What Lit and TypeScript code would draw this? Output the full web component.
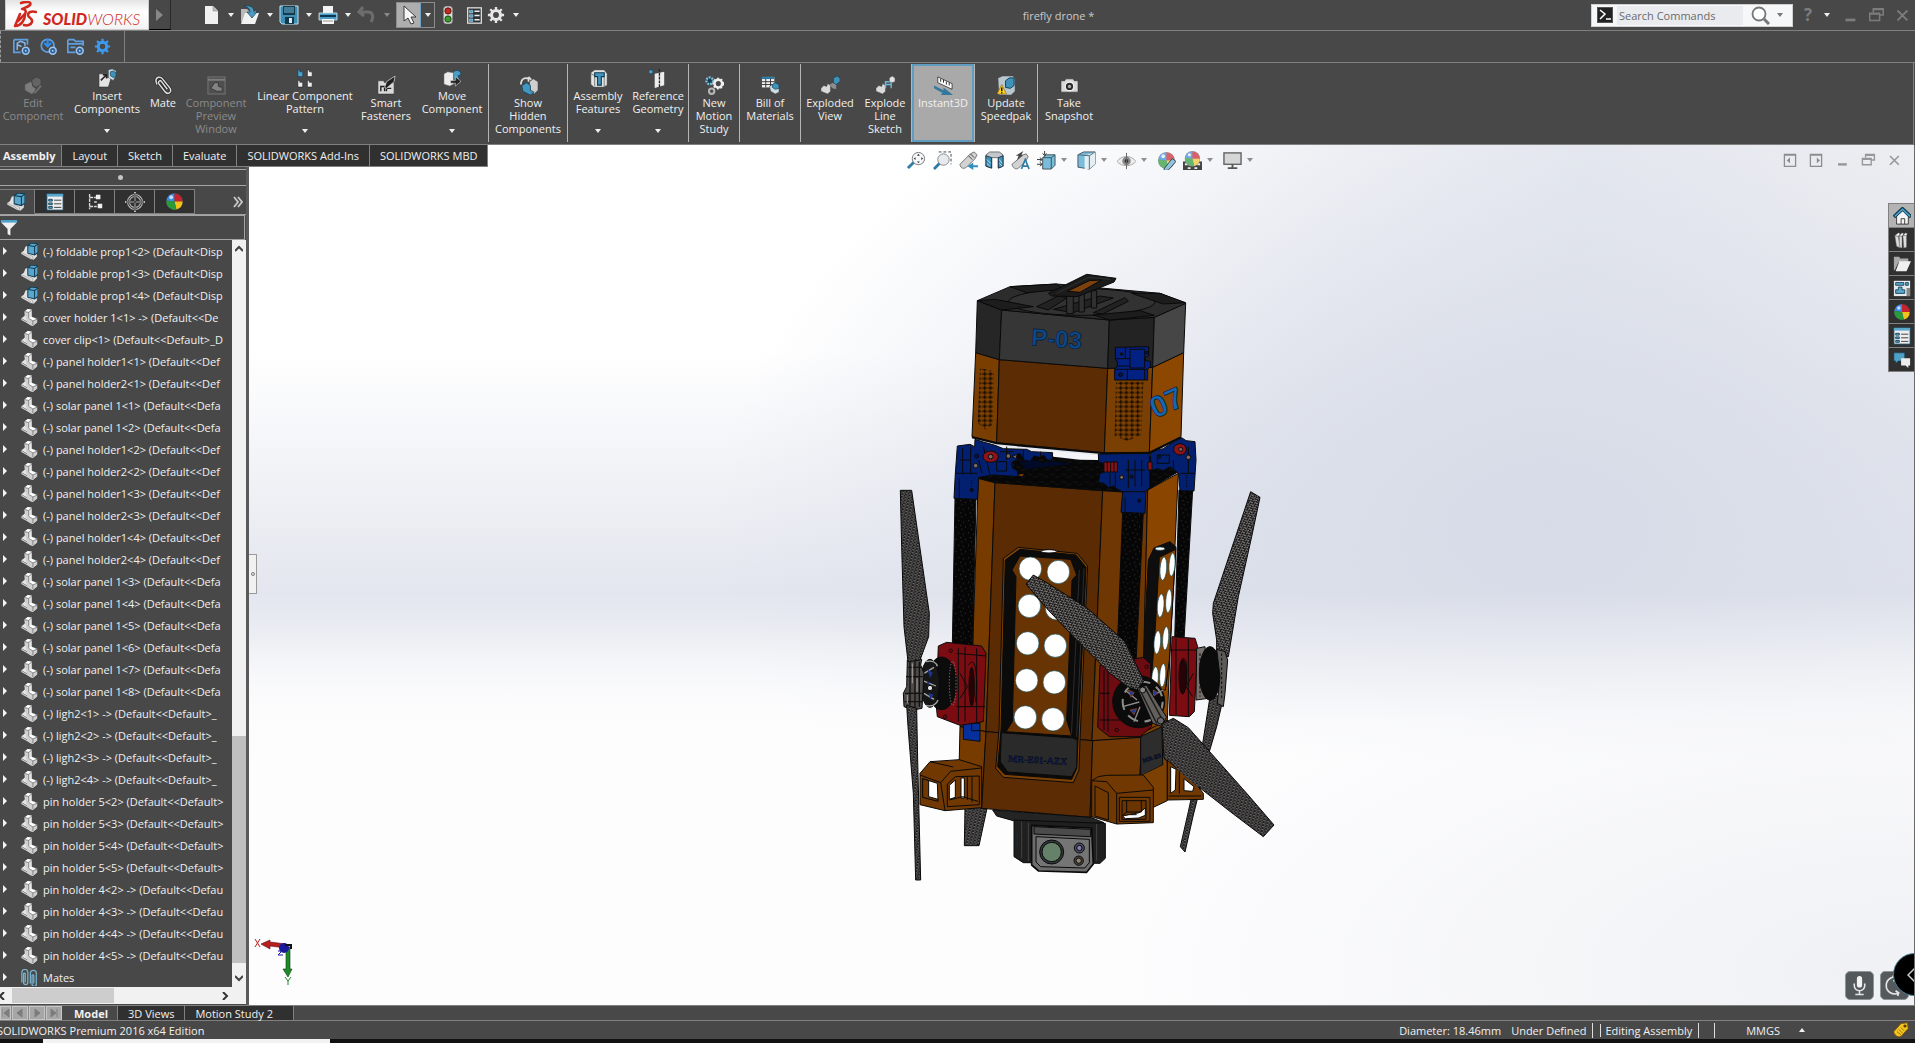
import { LitElement, html, svg, css, nothing } from "lit";
import { customElement, state } from "lit/decorators.js";
import { classMap } from "lit/directives/class-map.js";

const icon = (size: number, content: unknown, vb = "0 0 20 20") =>
  html`<svg width=${size} height=${size} viewBox=${vb} aria-hidden="true">${content}</svg>`;

const caret = html`<svg class="caret" width="6" height="4" viewBox="0 0 6 4" aria-hidden="true"><path d="M0 0h6L3 4z" fill="currentColor"/></svg>`;

/* ---------- glyph library ---------- */

const cube = svg`<path d="M1 9l6-3 2 1v4l3 2v4l-4 2-7-4z" fill="#dcdcdc" stroke="#777" stroke-width=".6"/>`;

const assemblyGlyph = svg`
  <path d="M0 11l3-2 2-5 5-2 2 9 7 1v4l-4 4-4-1-11-6z" fill="#e2e2e2" stroke="#2b2b2b" stroke-width=".5"/>
  <path d="M8 13l6 3v3M0 11l8 4 4 3" fill="none" stroke="#9a9a9a" stroke-width=".8"/>
  <path d="M8 3l4-3 8 1v10l-4 3-8-2z" fill="#5ba7cc" stroke="#0f3c55" stroke-width="1.200"/>
  <path d="M8 3l8 1 4-3M16 4v10" fill="none" stroke="#0f3c55" stroke-width="1.200"/>`;

const partGlyph = svg`
  <path d="M0 11l4-3V3l4-3 5 1v8l3 1 3 2v4l-5 4-3-1-11-6z" fill="#e6e6e6" stroke="#383838" stroke-width=".5"/>
  <path d="M4 3l4 1v7l6 3 5-3v5l-5 4-3-1-4-3z" fill="#cfcfcf"/>
  <path d="M4 3l4-3 5 1-4 3zM8 11l4-2 6 3-4 2z" fill="#fff"/>
  <path d="M4 3l5 1 4-3M9 4v7M9 11l5 3 5-2M14 14v5M0 11l7 4" fill="none" stroke="#6c6c6c" stroke-width=".9"/>`;

const matesGlyph = svg`
  <path d="M1 16V4a3 3 0 0 1 7 0v12a2 2 0 0 1-5 0V6a1 1 0 0 1 2 0v10M11 17V5a3 3 0 0 1 7 0v13a2 2 0 0 1-5 0V8a1 1 0 0 1 2 0v9" fill="none" stroke="#78b2cd" stroke-width="1.500"/>`;

const gear = (c: string) => svg`
  <circle cx="10" cy="10" r="5" fill="none" stroke=${c} stroke-width="3.500"/>
  <path d="M10 1v4M10 15v4M1 10h4M15 10h4M3.600 3.600l3 3M13.400 13.400l3 3M16.400 3.600l-3 3M6.600 13.400l-3 3" stroke=${c} stroke-width="2.600"/>`;

const ball = svg`
  <circle cx="10" cy="10" r="9" fill="#444"/>
  <path d="M10 10V1.500A8.500 8.500 0 0 0 1.500 9z" fill="#3a8be8"/><path d="M10 10V1.500A8.500 8.500 0 0 1 18.500 10z" fill="#c8232c"/>
  <path d="M10 10h8.500A8.500 8.500 0 0 1 12 18.300z" fill="#f1c21b"/><path d="M10 10l2 8.300A8.500 8.500 0 0 1 1.500 9z" fill="#2b9a3c"/>
  <circle cx="6.500" cy="5.500" r="2" fill="#fff" opacity=".7"/>`;

const paleBall = svg`
  <circle cx="10" cy="10" r="9" fill="#9a9a9a"/>
  <path d="M10 10V1.500A8.500 8.500 0 0 0 1.500 9z" fill="#6aa9ea"/><path d="M10 10V1.500A8.500 8.500 0 0 1 18.500 10z" fill="#d8616a"/>
  <path d="M10 10h8.500A8.500 8.500 0 0 1 12 18.300z" fill="#f3d469"/><path d="M10 10l2 8.300A8.500 8.500 0 0 1 1.500 9z" fill="#63b56f"/>
  <circle cx="6.500" cy="5.500" r="2" fill="#fff" opacity=".8"/>`;

const listGlyph = svg`
  <rect x="1" y="1" width="18" height="18" fill="#eee" stroke="#13455e"/><rect x="1" y="1" width="18" height="3" fill="#5ba7cc"/>
  <path d="M3 7h4v2H3zM3 11h4v2H3zM3 15h4v2H3z" fill="#5ba7cc" stroke="#13455e"/><path d="M9 8h8M9 12h8M9 16h8" stroke="#333"/>`;

const G: Record<string, unknown> = {
  newdoc: svg`<path d="M4 1h8l5 5v13H4z" fill="#f1f1f1"/><path d="M12 1v5h5" fill="#bbb" stroke="#8a8a8a" stroke-width=".6"/>`,
  open: svg`<path d="M1 4h6l2 2h7v3H6L1 18z" fill="#b9b9b9"/><path d="M1 19L5 8h14l-4 11z" fill="#f2f2f2"/><path d="M4 1c6-1 10 1 10 6h3l-5 6-5-6h3c0-3-2-5-6-6z" fill="#4b9cc4" stroke="#123d55" stroke-width=".7"/>`,
  save: svg`<path d="M1 1h18v18H3l-2-2z" fill="#3f8db3" stroke="#bfe2f2"/><rect x="4" y="1" width="12" height="9" fill="#16394c"/><path d="M5 3h10M5 5h10M5 7h10" stroke="#6fc0e2"/><rect x="6" y="12" width="9" height="7" fill="#12384c"/><rect x="10" y="13" width="3" height="5" fill="#dfe9ee"/>`,
  print: svg`<path d="M5 1h10v7H5z" fill="#f3f3f3"/><path d="M1 8h18v7H1z" fill="#4a9cc4" stroke="#cfe8f4" stroke-width=".8"/><path d="M2 11h16" stroke="#0f3850" stroke-width="2"/><path d="M4 14h12v5H4z" fill="#f6f6f6"/><path d="M5 16h10" stroke="#999"/>`,
  undo: svg`<path d="M6 2L2 7l5 4M3 7h8c5 0 6 5 3 10" fill="none" stroke="#6d6d6d" stroke-width="3"/>`,
  pointer: svg`<path d="M5 1v15l4-3 3 6 3-1-3-6h5z" fill="#f7f7f7" stroke="#3a3a3a"/>`,
  traffic: svg`<rect x="5" y="0" width="10" height="20" rx="4" fill="#d9d9d9" stroke="#8a8a8a"/><circle cx="10" cy="5.500" r="3.500" fill="#c22a1e" stroke="#5b120c"/><circle cx="10" cy="14.500" r="3.500" fill="#3d9a2d" stroke="#153f0e"/>`,
  options: svg`<rect x="2" y="1" width="16" height="18" fill="#2d3438" stroke="#e4e4e4" stroke-width="1.500"/><path d="M4 4h4v3H4zM4 9h4v3H4zM4 14h4v3H4z" fill="#4a9cc4" stroke="#d7edf7" stroke-width=".6"/><path d="M10 5h6M10 10h6M10 15h6" stroke="#eee" stroke-width="1.500"/>`,
  gearWhite: svg`${gear("#e6e6e6")}`,
  gearBlue: svg`${gear("#3d9bf0")}`,
  q1: svg`<path d="M1 2h16v6M1 2v15h8" fill="none" stroke="#5f9fe0" stroke-width="2"/><path d="M5 14V6l4-2 5 2v3M5 8l5 2" fill="none" stroke="#86b9ee" stroke-width="1.800"/><circle cx="15" cy="15" r="4" fill="#33639b" stroke="#9cc6f2" stroke-width="1.800"/><circle cx="15" cy="15" r="1" fill="#cfe4fa"/>`,
  q2: svg`<circle cx="9" cy="9" r="7.500" fill="none" stroke="#5f9fe0" stroke-width="2"/><path d="M9 1v8M5 6l4 4 4-4" stroke="#2f8df2" stroke-width="2.500" fill="none"/><circle cx="15" cy="15" r="4" fill="#33639b" stroke="#9cc6f2" stroke-width="1.800"/><circle cx="15" cy="15" r="1" fill="#cfe4fa"/>`,
  q3: svg`<path d="M1 2h7l2 2h9v5M1 2v15h9M1 7h18M4 11h6" fill="none" stroke="#5f9fe0" stroke-width="2"/><circle cx="15" cy="15" r="4" fill="#33639b" stroke="#9cc6f2" stroke-width="1.800"/><circle cx="15" cy="15" r="1" fill="#cfe4fa"/>`,
  edit: svg`<g opacity=".35">${cube}<path d="M8 4l5-3 5 2v6l-5 3-4-2z" fill="#999" stroke="#333"/><path d="M10 18l7-9 2 2-7 8z" fill="#bbb" stroke="#333" stroke-width=".6"/></g>`,
  insert: svg`<path d="M1 5h9v4h4l-3 10H1z" fill="#e4e4e4" stroke="#333" stroke-width=".7"/><path d="M3 12l6-6M5 6h4v4" stroke="#222" stroke-width="1.600" fill="none"/><path d="M11 1l4-1 4 2v5l-3 5-5-3z" fill="#cfe0ea" stroke="#555" stroke-width=".5"/><path d="M13 3l3-1 3 2v4l-3 1-3-2z" fill="#3f93bb" stroke="#0f3c55" stroke-width=".7"/>`,
  mate: svg`<path d="M3 9L2 5c0-4 5-5 7-2l8 10c2 4-2 7-5 4L5 8c-1-3 2-4 3-2l6 8" fill="none" stroke="#222" stroke-width="3"/><path d="M3 9L2 5c0-4 5-5 7-2l8 10c2 4-2 7-5 4L5 8c-1-3 2-4 3-2l6 8" fill="none" stroke="#dcdcdc" stroke-width="1.600"/>`,
  preview: svg`<g opacity=".4"><rect x="1" y="1" width="18" height="18" fill="#5b5b5b" stroke="#bbb"/><path d="M1 4h18" stroke="#ccc" stroke-width="2"/><path d="M4 13l4-6h4v4l4 1v4h-6z" fill="#ddd" stroke="#222"/></g>`,
  linear: svg`<path d="M2 1h2v2h3v5H2z" fill="#4fa3cb" stroke="#123d55" stroke-width=".6"/><path d="M12 1h2v2h3v5h-5zM2 12h2v2h3v5H2zM12 12h2v2h3v5h-5z" fill="#efefef" stroke="#222" stroke-width=".6"/>`,
  smart: svg`<path d="M1 5h6l1 2h10v12H1z" fill="#d9d9d9" stroke="#333" stroke-width=".6"/><path d="M4 16v-5h4v5M10 16v-3h5" fill="none" stroke="#222" stroke-width="1.500"/><path d="M19 0l-9 6-2 6 2 1 8-7z" fill="#222" stroke="#eee" stroke-width=".7"/>`,
  move: svg`<path d="M1 5l4-2 6 1v12l-4 2-6-2z" fill="#ececec" stroke="#555" stroke-width=".5"/><path d="M11 3c4-3 8-1 8 3l-3 1 2 6-5 4" fill="#4b9cc4" stroke="#123d55" stroke-width=".7"/><path d="M8 12h5V8l6 5-6 5v-3H8z" fill="#262626" stroke="#ddd" stroke-width=".6"/>`,
  showhidden: svg`<path d="M2 9c0-6 4-8 8-6M10 1v5M10 1l3 3" stroke="#ddd" stroke-width="1.800" fill="none"/><path d="M11 6l4-3 5 3v9l-4 4-4-4z" fill="#cfcfcf" stroke="#444" stroke-width=".6"/><path d="M3 10l5-3 4 3v5l4 2-4 3-8-4z" fill="#4496be" stroke="#0f3c55" stroke-width=".7"/>`,
  features: svg`<path d="M2 4l4-3h10l3 4v12l-4 2H5l-3-3z" fill="#e2e2e2" stroke="#555" stroke-width=".5"/><path d="M2 5l4 2v11M16 8v10" stroke="#777" fill="none"/><path d="M6 4h10v4h-3v9H9V8H6z" fill="#4496be" stroke="#123d55" stroke-width="1.200"/>`,
  refgeo: svg`<rect x="0" y="1" width="4" height="4" fill="#4fa3cb" stroke="#123d55" stroke-width=".6"/><path d="M6 5l10-2v14l-10 3z" fill="#ededed"/><path d="M11 0v20" stroke="#222" stroke-width="1.400" stroke-dasharray="3 1"/>`,
  motion: svg`<circle cx="5" cy="5" r="3.500" fill="#173c50" stroke="#7fc0dd" stroke-width="2.400" stroke-dasharray="2 1"/><circle cx="14" cy="8" r="4" fill="none" stroke="#efefef" stroke-width="2.600"/><circle cx="14" cy="8" r="5.500" fill="none" stroke="#efefef" stroke-width="1.500" stroke-dasharray="2 2"/><circle cx="7" cy="16" r="2.800" fill="none" stroke="#b5b5b5" stroke-width="2.200"/>`,
  bom: svg`<path d="M1 1h13v11H1z" fill="#f2f2f2"/><path d="M1 2h13" stroke="#2f7da6" stroke-width="2.500"/><path d="M1 6h13M1 9h13M5 3v9M10 3v9" stroke="#333"/><path d="M9 11l3-2 2-1 5 2v7l-4 2-5-3z" fill="#cfdbe2" stroke="#333" stroke-width=".5"/><path d="M12 9l3-2 4 2v4l-4 1-3-2z" fill="#3f93bb" stroke="#0f3c55" stroke-width=".7"/>`,
  exploded: svg`<path d="M0 13l3-3 3 1 1-3 3 2v6l-3 3-7-3z" fill="#dadada" stroke="#444" stroke-width=".5"/><path d="M9 9l4-2 3 2v5l-4-1z" fill="#8d8d8d"/><path d="M13 2l4-2 3 2v4l-4 3-3-2z" fill="#3f93bb" stroke="#0f3c55" stroke-width=".7"/>`,
  explodeline: svg`<path d="M0 13l3-3 3 1 1-3 3 2v6l-3 3-7-3z" fill="#dadada" stroke="#444" stroke-width=".5"/><path d="M10 13V6h6v7M10 9h6" stroke="#6fb5d6" stroke-width="1.500" fill="none"/><path d="M14 2l3-2 3 2v4l-3 1-3-1z" fill="#e2e2e2" stroke="#444" stroke-width=".5"/>`,
  instant: svg`<path d="M4 1l15 7v6L4 7z" fill="#fff" stroke="#222" stroke-width=".8"/><path d="M7 3v3M10 4v3M13 6v3M16 7v3" stroke="#222"/><path d="M0 10l10 5v-3l10 8-13 0 2-2-9-5z" fill="#35789f"/>`,
  speedpak: svg`<path d="M1 2l5-2h11l2 3v13l-4 4H2z" fill="#b9c7cf" stroke="#444" stroke-width=".5"/><path d="M9 5l4-3h5v8l-4 3-5-1z" fill="#3f93bb" stroke="#0f3c55"/><path d="M5 9l5 10H0z" fill="#ffd21f" stroke="#7c5a00" stroke-width=".6"/><path d="M5 12v4M5 17v1.500" stroke="#111" stroke-width="1.500"/>`,
  snapshot: svg`<path d="M1 5h4l1-2h8l1 2h4v12H1z" fill="#d9d9d9" stroke="#222" stroke-width=".6"/><circle cx="10" cy="11" r="4.500" fill="#2a2a2a" stroke="#f2f2f2" stroke-width="1.300"/><circle cx="10" cy="11" r="1.800" fill="#aaa"/>`,
  zoomfit: svg`<path d="M1 18l7-7" stroke="#2f7da6" stroke-width="3"/><circle cx="12" cy="8" r="6.500" fill="#f6f8fa" stroke="#777"/><path d="M12 3l1.500 2h-3zM12 13l1.500-2h-3zM7 8l2-1.500v3zM17 8l-2-1.500v3z" fill="#333"/>`,
  zoomarea: svg`<path d="M6 1h13v13" fill="none" stroke="#444" stroke-dasharray="3 2"/><path d="M1 19l6-6" stroke="#2f7da6" stroke-width="3"/><circle cx="11" cy="9" r="6" fill="#e6eaee" stroke="#888"/>`,
  prev: svg`<path d="M1 14L12 3l4-2 3 3-2 4-9 9c-3 2-6 2-7-3z" fill="#d2d2d2" stroke="#555" stroke-width=".8"/><path d="M12 3l4 4M10 5l4 4" stroke="#444"/><path d="M20 15h-5v-3l-6 4 6 4v-3h5z" fill="#2f8fc0"/>`,
  section: svg`<path d="M1 4l4-3h10l4 3v12l-5 2V7H7v11l-6-2z" fill="#c2c7cb" stroke="#555" stroke-width=".8"/><path d="M1 5l6 2v11l-6-2zM14 7l5-2v11l-5 2z" fill="#3f93bb" stroke="#234"/><path d="M2 9l4 4M2 13l3 3M15 9l3 4M15 13l3 3" stroke="#bfe2f2"/>`,
  dynamic: svg`<path d="M5 5l8-5-2 4h4l-9 6 2-5z" fill="#444"/><path d="M1 14L13 4l3-1 2 3-2 4-8 8c-3 2-6 0-7-4z" fill="#d2d2d2" stroke="#555" stroke-width=".8"/><path d="M11 19l4-10 4 10M12.500 16h5" stroke="#2f7da6" stroke-width="1.800" fill="none"/>`,
  orient: svg`<path d="M6 7l4-3h9v11l-4 4H6z" fill="#79bddb" stroke="#455"/><path d="M6 7h9v12M15 7l4-3" fill="none" stroke="#356"/><path d="M8 0v4M6 2.500L8 5l2-2.500M0 9h5M3 7l2.500 2L3 11M0 14h5M3 12l2.500 2L3 16" stroke="#333" fill="none"/>`,
  display: svg`<path d="M1 4l6-3h12v13l-6 5-12-2z" fill="#7bbcd9" stroke="#456"/><path d="M8 5l11-4v13l-6 5H8z" fill="#e4eff5"/><path d="M1 4l12 1 6-4M13 5v14" fill="none" stroke="#567"/>`,
  eye: svg`<path d="M0 11C5 4 15 4 20 11 15 17 5 17 0 11z" fill="#ededed" stroke="#aaa"/><circle cx="10" cy="10.500" r="4.500" fill="#888"/><circle cx="10" cy="10.500" r="2" fill="#333"/><path d="M10 2v17" stroke="#666"/>`,
  appearance: svg`${paleBall}<path d="M8 18l8-10 4 3-8 9-5 1z" fill="#8fc6df" stroke="#223" stroke-width=".8"/>`,
  scene: svg`<path d="M0 11h20v9H0z" fill="#444"/><path d="M2 13h3v2H2zM15 13h3v2h-3zM5 17h3v2H5zM12 17h3v2h-3z" fill="#eee"/><g transform="scale(.9) translate(1 -1)">${paleBall}</g>`,
  monitor: svg`<rect x="1" y="2" width="18" height="12" fill="#d6d6d6" stroke="#666" stroke-width="1.500"/><path d="M10 14v4M5 18h10" stroke="#555" stroke-width="2"/>`,
  collapseL: svg`<path d="M3 3h14v15H3zM3 4h14" fill="none" stroke="#8c8c90" stroke-width="1.600"/><path d="M10 7v7l-4-3.500z" fill="#8c8c90"/>`,
  collapseR: svg`<path d="M3 3h14v15H3zM3 4h14" fill="none" stroke="#8c8c90" stroke-width="1.600"/><path d="M11 7v7l4-3.500z" fill="#8c8c90"/>`,
  min: svg`<path d="M5 14h11v3H5z" fill="currentColor"/>`,
  restore: svg`<path d="M7 7V3h11v7h-4M3 8h11v8H3zM3 9h11M7 4h11" fill="none" stroke="currentColor" stroke-width="1.700"/>`,
  close: svg`<path d="M5 5l11 11M16 5L5 16" stroke="currentColor" stroke-width="2"/>`,
  home: svg`<path d="M4 10v9h13v-9l-6-6z" fill="#f4f4f4" stroke="#333"/><path d="M1 11L10.500 2 20 11" fill="none" stroke="#123d55" stroke-width="4"/><path d="M2 10.500L10.500 2.500 19 10.500" fill="none" stroke="#4fa3cb" stroke-width="1.800"/><path d="M9 19v-6h4v6" fill="none" stroke="#333"/>`,
  library: svg`<path d="M2 5l4 1 2 13-4-2zM7 5l3 1v13l-3-1zM11 5l4-1v14l-3 1z" fill="#dcdcdc" stroke="#666" stroke-width=".5"/><path d="M2 5l4-3 2 1-2 3zM7 5l3-3 2 1-2 3zM11 5l3-3 2 1-1 2z" fill="#f5f5f5" stroke="#444" stroke-width=".5"/>`,
  folder: svg`<path d="M1 2h6l1 2h9v4H6L2 17H1z" fill="#a9a9a9"/><path d="M3 18L7 7h13l-5 11z" fill="#efefef"/>`,
  palette: svg`<rect x="1" y="2" width="18" height="17" fill="#e9e9e9"/><path d="M3 4h9v3H3zM14 4h3v3h-3zM6 9h4v3h3v4H3v-4h3z" fill="#5ba7cc" stroke="#13455e"/><path d="M15 10h4v9h-4z" fill="#888"/>`,
  ball, list: listGlyph,
  chat: svg`<path d="M1 2h12v9H6l-3 3v-3H1z" fill="#4f9fc6" stroke="#123d55" stroke-width=".6"/><path d="M9 8h10v8h-2v3l-3-3H9z" fill="#ececec"/>`,
  tree: svg`<path d="M4 1v17M4 5h7M4 15h8M9 10h3" stroke="#d8d8d8" stroke-width="1.500" fill="none" stroke-dasharray="4 1"/><path d="M11 2h5v5h-5zM13 12h5v5h-5z" fill="#f2f2f2"/>`,
  target: svg`<circle cx="10" cy="10" r="6.500" fill="none" stroke="#b8b8b8" stroke-width="3"/><circle cx="10" cy="10" r="6.500" fill="none" stroke="#222"/><path d="M10 0v20M0 10h20" stroke="#b8b8b8" stroke-width="2"/><path d="M10 1v18M1 10h18" stroke="#222"/>`,
  assembly: assemblyGlyph,
  funnel: svg`<path d="M1 1h18v3l-7 7v8l-4-2v-6L1 4z" fill="#f0f0f0" stroke="#2b2b2b" stroke-width=".6"/><path d="M1 1h18v3H1z" fill="#4fa3cb"/>`,
  tag: svg`<path d="M1 12L10 2l8-1 1 7-9 10c-4 2-9-2-9-6z" fill="#f3c522" stroke="#7b5200"/><circle cx="15" cy="5" r="2" fill="#5a3c00"/><path d="M5 12l5 4M7 9l5 5M10 7l4 4" stroke="#8a6200"/>`,
  mic: svg`<rect x="7.500" y="1" width="5" height="11" rx="2.500" fill="#f4f4f4"/><path d="M5 8v2a5 5 0 0 0 10 0V8M10 15v3M6 18.500h8" fill="none" stroke="#e4e4e4" stroke-width="1.500"/>`,
};

interface Tool { label: string[]; glyph: string; width: number; menu?: boolean; off?: boolean; on?: boolean; }

const RIBBON: Tool[][] = [
  [
    { label: ["Edit", "Component"], glyph: "edit", width: 66, off: true },
    { label: ["Insert", "Components"], glyph: "insert", width: 82, menu: true },
    { label: ["Mate"], glyph: "mate", width: 30 },
    { label: ["Component", "Preview", "Window"], glyph: "preview", width: 76, off: true },
    { label: ["Linear Component", "Pattern"], glyph: "linear", width: 102, menu: true },
    { label: ["Smart", "Fasteners"], glyph: "smart", width: 60 },
    { label: ["Move", "Component"], glyph: "move", width: 72, menu: true },
  ],
  [{ label: ["Show", "Hidden", "Components"], glyph: "showhidden", width: 78 }],
  [
    { label: ["Assembly", "Features"], glyph: "features", width: 60, menu: true },
    { label: ["Reference", "Geometry"], glyph: "refgeo", width: 60, menu: true },
  ],
  [{ label: ["New", "Motion", "Study"], glyph: "motion", width: 50 }],
  [{ label: ["Bill of", "Materials"], glyph: "bom", width: 60 }],
  [
    { label: ["Exploded", "View"], glyph: "exploded", width: 58 },
    { label: ["Explode", "Line", "Sketch"], glyph: "explodeline", width: 52 },
  ],
  [{ label: ["Instant3D"], glyph: "instant", width: 62, on: true }],
  [{ label: ["Update", "Speedpak"], glyph: "speedpak", width: 62 }],
  [{ label: ["Take", "Snapshot"], glyph: "snapshot", width: 62 }],
];

const range = (n: number, from = 1) => Array.from({ length: n }, (_, i) => i + from);

const TREE: { kind: "asm" | "part" | "mates"; text: string }[] = [
  ...range(3, 2).map((n) => ({ kind: "asm" as const, text: `(-) foldable prop1<${n}> (Default<Disp` })),
  ...[
    `cover holder 1<1> -> (Default<<De`,
    `cover clip<1> (Default<<Default>_D`,
    `(-) panel holder1<1> (Default<<Def`,
    `(-) panel holder2<1> (Default<<Def`,
    `(-) solar panel 1<1> (Default<<Defa`,
    `(-) solar panel 1<2> (Default<<Defa`,
    ...range(3, 2).flatMap((n) => [`(-) panel holder1<${n}> (Default<<Def`, `(-) panel holder2<${n}> (Default<<Def`]),
    ...range(6, 3).map((n) => `(-) solar panel 1<${n}> (Default<<Defa`),
    ...range(4).map((n) => `(-) ligh2<${n}> -> (Default<<Default>_`),
    ...range(4, 2).map((n) => `pin holder 5<${n}> (Default<<Default>`),
    ...range(4, 2).map((n) => `pin holder 4<${n}> -> (Default<<Defau`),
  ].map((text) => ({ kind: "part" as const, text })),
  { kind: "mates", text: "Mates" },
];

/* ---------- 3D model ---------- */

@customElement("drone-model")
class DroneModel extends LitElement {
  static styles = css`
    :host { display: block; }
    svg { display: block; }
    .mark { font-family: "Liberation Sans", sans-serif; font-weight: 700; }
    .plate { font-family: "Liberation Serif", serif; font-weight: 700; }
  `;

  render() {
    const rows = [
      [451, 926, 535, 936], [448, 1038, 530, 1045], [443, 1150, 526, 1157], [440, 1261, 523, 1267], [436, 1372, 519, 1378],
    ];
    const side = [[850, 926, 876, 914], [842, 1037, 866, 1023], [832, 1147, 857, 1135], [825, 1255, 848, 1246]];
    return html`<svg width="420" height="640" viewBox="0 0 1260 1920" role="img" aria-label="Drone assembly">
      <defs>
        <pattern id="weave" width="11" height="9" patternUnits="userSpaceOnUse" patternTransform="rotate(12)">
          <rect width="11" height="9" fill="#131313"/><path d="M0 2h7M5 6h6" stroke="#8d8887" stroke-width="2.500"/>
        </pattern>
        <pattern id="weave2" width="12" height="9" patternUnits="userSpaceOnUse" patternTransform="rotate(-25)">
          <rect width="12" height="9" fill="#151515"/><path d="M0 2h8M5 6h7" stroke="#8a8685" stroke-width="2.600"/>
        </pattern>
        <pattern id="speck" width="29" height="37" patternUnits="userSpaceOnUse">
          <rect width="29" height="37" fill="#060606"/>
          <path d="M4 5h2M17 9h2M9 19h2M24 24h2M13 31h2" stroke="#777" stroke-width="2"/>
        </pattern>
        <pattern id="grille" width="17" height="14" patternUnits="userSpaceOnUse">
          <path d="M1 6h14M8 0v12" stroke="#140900" stroke-width="3.500"/>
        </pattern>
        <pattern id="rough" width="34" height="22" patternUnits="userSpaceOnUse">
          <rect width="34" height="22" fill="#070707"/><path d="M1 4l14 3M16 15l14-4" stroke="#1b1b1b" stroke-width="2"/>
        </pattern>
      </defs>

      <g stroke="#0a0a0a" stroke-width="3" stroke-linejoin="round">
        <!-- rear propellers -->
        <path d="M255 1640L322 1640 297 1757 253 1757z" fill="url(#weave)"/>
        <path d="M990 1310L1032 1305 1010 1400 988 1475 940 1665 915 1776 901 1760 925 1655 965 1470z" fill="url(#weave)"/>
        <path d="M1112 695L1140 712 1115 830 1075 1010 1045 1190 1010 1185 1010 1140 998 1060 1000 1030 1050 880z" fill="url(#weave2)"/>

        <!-- upper fuselage faces -->
        <path d="M295 655L345 668 318 1415 240 1400 245 1380 278 1160z" fill="#773b00"/>
        <path d="M345 668L668 692 636 1442 318 1415z" fill="#5b2c04"/>
        <path d="M668 692L803 690 790 1300 785 1432 636 1442z" fill="#6e3703"/>
        <path d="M803 690L895 640 870 1180 860 1430 785 1432z" fill="#8a4500"/>

        <!-- open bay between cap and body -->
        <path d="M345 580L810 590 895 635 803 690 728 696 668 692 345 668 295 655z" fill="url(#rough)"/>
        <path d="M515 573L655 585 655 600 600 599 520 590z" fill="#f4f5f8" stroke="none"/>
        <path d="M470 615l28-5 -20 10zM412 645l20-4-6 8z" fill="#8a4500" stroke="none"/>

        <!-- carbon tubes -->
        <path d="M225 715L288 715 278 1160 217 1155z" fill="url(#speck)"/>
        <path d="M728 755L790 755 768 1210 711 1185z" fill="url(#speck)"/>
        <path d="M897 690L938 690 912 1140 884 1140z" fill="url(#speck)"/>

        <!-- blue hinge brackets -->
        <g fill="#02206f">
          <path d="M285 538L310 546 345 556 370 566 440 568 455 575 518 578 515 602 500 598 492 586 478 592 462 588 450 604 432 600 420 580 410 585 412 600 396 606 398 625 412 632 414 650 340 645 296 652 292 718 222 715 226 640 232 558 270 553 284 560z"/>
          <path d="M655 582L808 578 810 680 798 695 795 760 723 757 728 695 716 690 700 678 684 682 672 670 655 668 660 640 674 636 670 610 656 606z"/>
          <path d="M812 575L850 566 880 545 905 533 918 542 945 545 948 600 942 693 900 692 896 640 870 620 850 632 832 626 812 632z"/>
          <path d="M226 640h66M238 655v58M728 695h68M735 712v45M900 640h44M272 560v80M248 565v75M296 600l10 40M310 560l20 85M350 605h30v28h-30zM380 560v40M745 600v85M765 600v80M785 600v80M735 630h60M832 585h36v25h-36zM430 570v30M482 575v14M880 600v26M925 560v80M240 600h30M360 575h40M690 640v36M706 640v38" fill="none"/>
        </g>
        <path d="M418 606l40-6 30 8 30-4 60 8-80 8-60 8z" fill="#020a2a" stroke="none"/>
        <g fill="#8d1319"><ellipse cx="332" cy="590" rx="23" ry="17"/><rect x="672" y="606" width="40" height="30"/><ellipse cx="900" cy="568" rx="19" ry="17"/><path d="M804 606h12v24h-12z"/></g>
        <path d="M682 606v30M692 606v30M702 606v30" fill="none"/>
        <g fill="#7d695c"><circle cx="287" cy="617" r="7"/><circle cx="385" cy="588" r="7"/><circle cx="725" cy="652" r="6"/><circle cx="925" cy="592" r="7"/><circle cx="332" cy="590" r="7"/><circle cx="902" cy="568" r="6"/><path d="M396 590l16-8-4 14z"/></g>
        <g fill="#02134c"><circle cx="275" cy="690" r="5"/><circle cx="778" cy="722" r="5"/><circle cx="290" cy="588" r="6"/><circle cx="400" cy="615" r="5"/><circle cx="838" cy="590" r="5"/><circle cx="755" cy="650" r="5"/></g>
        <path d="M275 660v40M920 645v40" stroke-dasharray="4 4"/>

        <!-- cap: orange band -->
        <path d="M287 278L358 299 350 548 276 530z" fill="#7a3e00"/>
        <path d="M358 299L683 325 673 578 350 548z" fill="#5c2d04"/>
        <path d="M683 325L818 322 808 577 673 578z" fill="#7a3f02"/>
        <path d="M818 322L911 278 903 530 808 577z" fill="#8c4700"/>
        <path d="M276 532L350 550 673 580 808 579 903 532" fill="none" stroke-width="6"/>
        <path d="M300 325l42 8-3 160-22 16-24-20z" fill="url(#grille)" stroke="none"/>
        <path d="M708 365l82 0-6 160-42 18-38-15z" fill="url(#grille)" stroke="none"/>

        <!-- cap: gray band -->
        <path d="M292 122L365 150 358 299 287 278z" fill="#262626"/>
        <path d="M365 150L688 180 683 325 358 299z" fill="#363636"/>
        <path d="M688 180L823 172 818 322 683 325z" fill="#232323"/>
        <path d="M823 172L917 130 911 278 818 322z" fill="#464646"/>
        <path d="M292 122L390 80 530 72 840 100 917 130 823 172 688 180 365 150z" fill="#2c2c2c"/>
        <ellipse cx="605" cy="126" rx="220" ry="40" fill="#323232"/>
        <path d="M292 122L345 118 460 140 365 150zM390 80L530 72 550 88 440 98zM755 100L840 100 917 128 850 132zM640 165L780 152 823 166 690 180z" fill="#1d1d1d"/>
        <path d="M470 140L535 108 562 113 505 150zM640 158L735 113 745 124 668 162zM520 148l140-40 40 6-120 44z" fill="#222"/>
        <path d="M560 105h20v56h-20zM597 100h16v56h-16zM634 92h16v52h-16z" fill="#303030"/>
        <path d="M505 100L620 43 708 55 702 66 592 110 515 108z" fill="#1b1b1b"/>
        <path d="M530 100L625 52 690 58" fill="none" stroke="#3b3b3b" stroke-width="2"/>
        <path d="M562 94L628 62 664 60 600 97z" fill="#7c410c"/>

        <!-- hinge on cap -->
        <g fill="#032182">
          <path d="M706 262L806 260 806 288 796 292 796 302 812 304 812 318 803 328 803 360 704 360 704 328 712 318 712 304 706 300z"/>
          <path d="M736 262v34M750 268h44v56h-44zM706 296h44M712 318h38M704 328h99M742 328v32M794 328v32" fill="none"/>
          <circle cx="725" cy="282" r="4" fill="#02134c"/><circle cx="722" cy="344" r="6" fill="#02134c"/><circle cx="800" cy="278" r="4" fill="#02134c"/>
        </g>

        <!-- lower fuselage -->
        <path d="M240 1400L318 1415 305 1645 235 1620z" fill="#773b00"/>
        <path d="M318 1415L638 1442 630 1672 305 1645z" fill="#5c2d04"/>
        <path d="M638 1442L785 1432 780 1550 760 1640 630 1672z" fill="#6e3703"/>
        <path d="M785 1420L862 1380 862 1622 820 1642 700 1655 780 1550z" fill="#7c4002"/>
        <path d="M250 1390l50 0 0 54-50-6z" fill="#05309c"/><path d="M275 1392v20h25" fill="none"/>

        <!-- front light panel -->
        <path d="M370 895L415 862 592 880 623 918 600 1440 597 1530 580 1568 370 1552 347 1525 357 1410z" fill="#7c4103"/>
        <path d="M376 900L420 868 588 885 618 922 594 1440 590 1526 575 1558 374 1543 353 1520 363 1410z" fill="#0b0b0b"/>
        <path d="M598 930L574 1430M612 925L590 1430" stroke="#2c2c2c"/>
        <path d="M396 930L420 888 572 898 590 945 576 960 560 1380 575 1428 378 1415 397 1385 408 950z" fill="#693404"/>
        <path d="M364 1418L578 1434 592 1440 590 1522 575 1550 383 1536 361 1505z" fill="#2a2a2a"/>
        <ellipse cx="507" cy="874" rx="24" ry="5" fill="#fff"/>
      </g>
      <g fill="#fff" stroke="#124a55" stroke-width="2">
        ${rows.map(([a, b, c, d]) => svg`<ellipse cx=${a} cy=${b} rx="34" ry="35"/><ellipse cx=${c} cy=${d} rx="34" ry="35"/>`)}
      </g>

      <g stroke="#0a0a0a" stroke-width="3" stroke-linejoin="round">
        <!-- side light panel -->
        <path d="M805 900L822 864 870 845 888 862 868 1180 858 1280 790 1290 795 1100z" fill="#0e0e0e"/>
        <path d="M838 892L887 868 868 1200 856 1290 812 1290 826 1100z" fill="#844200"/>
        <g fill="#fff" stroke="#124a55" stroke-width="2">
          ${side.map(([a, b, c, d]) => svg`<ellipse cx=${a} cy=${b} rx="10" ry="35" transform=${`rotate(4 ${a} ${b})`}/><ellipse cx=${c} cy=${d} rx="9" ry="35" transform=${`rotate(4 ${c} ${d})`}/>`)}
          <ellipse cx="840" cy="866" rx="14" ry="5"/>
        </g>
        <path d="M782 1430L846 1400 848 1515 782 1548z" fill="#2d2d2d"/>
        <path d="M782 1550L850 1518" fill="none" stroke="#7c4103" stroke-width="5"/>

        <!-- red arm mounts -->
        <g fill="#7b0d12">
          <path d="M175 1158L200 1147 305 1158 318 1180 310 1385 240 1396 172 1370 168 1330z"/>
          <path d="M876 1130L945 1135 953 1160 943 1355 928 1370 868 1366z"/>
          <path d="M660 1215L790 1192 812 1212 815 1400 780 1430 688 1430 653 1402z" fill="#6c0b10"/>
          <path d="M235 1165v220M255 1160v225M290 1165v220M230 1340h85M230 1180l88 8M265 1215c20-30 30 20 22 110M240 1240l22 40-22 35M888 1135v230M925 1135v232M940 1240l-22 40 20 30M905 1200c15-20 20 30 10 90M870 1170h80M672 1230v180M684 1225v190M660 1300h30M660 1380h60" fill="none"/>
          <circle cx="212" cy="1172" r="5"/><circle cx="195" cy="1370" r="5"/><circle cx="800" cy="1220" r="5"/><circle cx="710" cy="1410" r="5"/>
          <ellipse cx="275" cy="1280" rx="8" ry="58" fill="#260406"/><ellipse cx="908" cy="1250" rx="11" ry="52" fill="#260406"/>
        </g>

        <!-- left motor -->
        <ellipse cx="185" cy="1270" rx="45" ry="79" fill="#0c0c0c"/>
        <ellipse cx="218" cy="1270" rx="10" ry="66" fill="none" stroke="#777" stroke-width="3" stroke-dasharray="4 5"/>
        <ellipse cx="150" cy="1270" rx="28" ry="72" fill="#161616"/>
        <path d="M138 1205c20-6 32 4 34 14M138 1336c20 6 32-4 36-16M128 1262l40 16M132 1300l30 18M132 1240l30-18" stroke="#a5a5a5" stroke-width="4" fill="none"/>
        <path d="M142 1228l16 10-8 16zM145 1298l16 6-10 14zM140 1262l10 6-6 8z" fill="#1c348e" stroke="none"/>
        <circle cx="150" cy="1284" r="8" fill="#ddd"/>
        <path d="M82 1200L112 1192 125 1198 122 1215 132 1240 126 1345 100 1350 72 1340 70 1300 80 1280z" fill="#4d4a48"/>
        <path d="M90 1205v130M105 1200v145M118 1205v135M75 1300h50M78 1250h50M84 1222h40M74 1325h52" stroke="#111" stroke-width="4"/>
        <path d="M97 1210v60M111 1255v40M82 1305v25" stroke="#a39e9b" stroke-width="3"/>

        <!-- right motor -->
        <path d="M950 1165L975 1160 985 1315 948 1320z" fill="#77706c"/>
        <ellipse cx="990" cy="1240" rx="32" ry="80" fill="#0b0b0b"/>
        <path d="M1010 1168L1035 1175 1043 1200 1035 1300 1030 1340 1012 1330 1020 1250z" fill="#5c5a59"/>
        <path d="M960 1180v130M1025 1180v140" stroke-dasharray="8 6"/>

        <!-- left propeller -->
        <path d="M61 691L95 691 148 1060 146 1130 120 1200 84 1205 72 1100 65 860z" fill="url(#weave)"/>
        <path d="M80 1335L110 1345 113 1500 122 1860 107 1860 100 1600 84 1400z" fill="url(#weave)"/>

        <!-- centre motor and propeller -->
        <circle cx="776" cy="1325" r="78" fill="#0b0b0b"/>
        <circle cx="788" cy="1325" r="60" fill="none" stroke="#8d8d8d" stroke-width="6" stroke-dasharray="34 20"/>
        <path d="M735 1290l36 30M728 1340l50-14M762 1385l18-45M850 1290l-50 25M845 1355l-45-20" stroke="#8d8d8d" stroke-width="4"/>
        <path d="M745 1290l18 8-10 14zM750 1350l20-4-8 18zM820 1290l14 8-14 12z" fill="#203a96" stroke="#a5521c" stroke-width="2"/>
        <path d="M438 972L460 945 500 968 620 1043 735 1145 792 1262 772 1290 742 1280 690 1240 580 1130 500 1045z" fill="url(#weave2)"/>
        <path d="M846 1392L880 1375 925 1403 1100 1600 1182 1695 1150 1730 1060 1662 900 1537 852 1495z" fill="url(#weave)"/>
        <path d="M772 1285L800 1276 860 1372 842 1398 818 1390z" fill="#625f5d"/>
        <path d="M780 1290l50 100M795 1283l52 96" stroke="#1a1a1a" stroke-width="4"/>
        <circle cx="788" cy="1290" r="9" fill="#888"/><circle cx="842" cy="1382" r="10" fill="#666"/>

        <!-- gimbal and camera -->
        <path d="M338 1650L632 1672 672 1688 560 1700 400 1682 350 1668z" fill="#242424"/>
        <path d="M402 1680L676 1690 676 1795 660 1810 430 1808 402 1790z" fill="#1f1f1f"/>
        <path d="M425 1685v110M445 1688v115M650 1692v110" stroke="#444"/>
        <path d="M455 1696L635 1704 640 1812 620 1837 476 1833 455 1815z" fill="#6d6d6d" stroke-width="5"/>
        <path d="M462 1700L632 1708 632 1730 462 1722z" fill="#4b4b4b"/>
        <path d="M468 1730L628 1738 628 1808 614 1824 482 1820 468 1806z" fill="#757575"/>
        <circle cx="515" cy="1776" r="36" fill="#33383a"/><circle cx="515" cy="1776" r="29" fill="#66816a"/>
        <circle cx="598" cy="1764" r="15" fill="#4c4c66"/><circle cx="598" cy="1764" r="8" fill="#7d7da8"/>
        <circle cx="596" cy="1802" r="14" fill="#4d463d"/><circle cx="596" cy="1802" r="8" fill="#90826f"/>
        <path d="M412 1722v40" stroke="#0a2b6c" stroke-width="4" stroke-dasharray="6 4"/>

        <!-- left landing foot -->
        <g fill="#713802">
          <path d="M120 1540L150 1505 238 1499 305 1520 305 1643 195 1652 120 1634z"/>
          <path d="M120 1545L182 1568 212 1534 305 1524M182 1568L195 1652M150 1505l70 16M202 1572L226 1550 298 1548 298 1634 202 1640z" fill="none"/>
          <path d="M128 1556L172 1570 174 1622 128 1612z" fill="#fff"/>
          <path d="M128 1556l18 6v48l28 8v6l-46-12z"/>
          <path d="M208 1576L226 1560 226 1612 208 1618z" fill="#fff"/>
          <path d="M243 1554h10v60h-10z" fill="#fff"/><path d="M262 1550v70M276 1550v76M208 1620l40-10 46 14" fill="none"/>
        </g>
        <!-- front landing foot -->
        <g fill="#713802">
          <path d="M635 1562L655 1550 680 1546 790 1545 820 1582 820 1688 710 1692 635 1670z"/>
          <path d="M680 1565L710 1600 820 1590M710 1600V1692M635 1562l45 3M645 1578l40 20v82l-40-12zM718 1612H810v72H718z" fill="none"/>
          <path d="M726 1622h72v56h-72z" fill="#6b3503"/>
          <path d="M728 1668l50-10 18-14v22l-20 8-40 2z" fill="#fff"/>
          <path d="M740 1622v34h44v-34M740 1656l-12 10M750 1664h20" fill="none"/>
        </g>
        <!-- right landing foot -->
        <g fill="#713802">
          <path d="M862 1500L890 1525 950 1575 970 1600 970 1618 862 1620z"/>
          <path d="M872 1520L888 1528 886 1590 872 1600z" fill="#fff"/><path d="M912 1556l30 24-4 14-26-2z" fill="#fff"/>
          <path d="M866 1608h98M898 1535v66" fill="none"/>
        </g>
        <path d="M856 1490l60 60 40 34-10-60-50-60z" fill="url(#weave)" stroke="none"/>
      </g>

      <text class="mark" x="452" y="256" font-size="72" fill="#0b4a8e" stroke="#0a1a38" stroke-width="2" transform="rotate(4 452 256)">P-03</text>
      <text class="mark" x="826" y="476" font-size="90" fill="#1567b4" stroke="#0a1a38" stroke-width="2" transform="rotate(-24 826 476)">07</text>
      <text class="plate" x="384" y="1505" font-size="29" fill="#0b1a52" stroke="#05070d" transform="rotate(3 384 1505)">MR-E01-AZX</text>
      <text class="plate" x="790" y="1508" font-size="18" fill="#0b1a52" stroke="#05070d" transform="rotate(-17 790 1508)">MR-E0</text>
    </svg>`;
  }
}

/* ---------- application shell ---------- */

@customElement("app-root")
class AppRoot extends LitElement {
  static styles = css`
    :host { display: block; --bg: #484848; --dark: #303030; --line: #808080; }
    * { box-sizing: border-box; }
    svg { display: block; flex: none; }
    button, input { font: inherit; color: inherit; background: none; border: 0; padding: 0; margin: 0; }
    ul { list-style: none; margin: 0; padding: 0; }
    .app { display: flex; flex-direction: column; height: 100vh; background: var(--bg); color: #f0f0f0; font: 11px/13px "Open Sans", "Noto Sans", sans-serif; overflow: hidden; }

    .title { display: flex; align-items: center; height: 31px; flex: none; border-bottom: 1px solid var(--line); }
    .logo { display: flex; align-items: center; gap: 6px; height: 30px; width: 144px; margin-left: 5px; padding-left: 5px; background: linear-gradient(#e4e4e4, #fff 40%, #f3f3f3); color: #d0281e; border: 1px solid #ccc; border-top: 0; }
    .word { font: italic 300 16px/20px Lato, "Open Sans", sans-serif; padding-top: 8px; }
    .word b { font-weight: 900; }
    .expand { display: flex; align-items: center; justify-content: center; width: 22px; height: 30px; color: #888; border-right: 1px solid #2a2a2a; border-bottom: 1px solid #000; }
    .tools { display: flex; align-items: center; padding-left: 30px; }
    .tool { display: flex; align-items: center; gap: 7px; padding: 0 6px 0 0; width: 39px; height: 26px; }
    .tool.pick { border: 1px solid #8c8c8c; padding: 0; gap: 0; width: 39px; }
    .pick .face { display: flex; align-items: center; justify-content: center; width: 24px; height: 24px; background: #aeaeae; border-right: 1px solid #6fa5c4; margin-right: 4px; }
    .tool.dim .caret { color: #8a8a8a; }
    .tool.solo { width: 26px; justify-content: center; padding: 0; }
    .tool.opts { gap: 8px; }
    .doc { flex: 1; text-align: center; color: #c9c9c9; }
    .search { display: flex; align-items: center; width: 202px; height: 23px; padding: 0 5px; gap: 4px; background: #f6f7f8; border: 1px solid #d0d0d0; color: #777; }
    .search input { flex: 1; min-width: 0; height: 19px; padding: 0 2px; background: #e9ebef; color: #555; outline: 0; }
    .search input::placeholder { color: #6a6a6a; opacity: 1; }
    .search button { display: flex; align-items: center; gap: 7px; padding: 0 4px; }
    .win { display: flex; align-items: center; gap: 10px; padding: 0 5px 0 9px; color: #7c7c7c; }
    .win button { display: flex; align-items: center; justify-content: center; width: 16px; height: 24px; }
    .win .help { width: 30px; gap: 12px; font: 700 17px/20px "Open Sans", sans-serif; color: #7d7d7d; }
    .win .help .caret { color: #f0f0f0; }

    .quick { display: flex; align-items: center; height: 32px; flex: none; border-bottom: 1px solid var(--line); }
    .set { display: flex; align-items: center; gap: 10px; height: 31px; width: 125px; padding-left: 12px; border-left: 1px dashed #999; border-right: 1px solid var(--line); }

    .ribbon { display: flex; height: 82px; flex: none; padding: 1px 0 2px; border-bottom: 1px solid var(--line); margin-right: 1px; border-right: 1px solid var(--line); }
    .group { display: flex; border-right: 1px solid #b5b5b5; }
    .group:last-child { border-right: 0; }
    .cmd { display: flex; flex-direction: column; align-items: center; padding-top: 12px; gap: 1px; white-space: nowrap; }
    .cmd.menu { padding-top: 5px; padding-bottom: 9px; }
    .cmd.menu .caret { margin-top: auto; }
    .cmd:disabled { color: #8b8b8b; }
    .cmd.on { background: #a9a9a9; border: 2px solid #5f9cbf; padding-top: 10px; }

    .work { display: grid; grid-template-columns: 249px 1fr; grid-template-rows: 22px 1fr; flex: 1; min-height: 0; }
    .tabs { grid-area: 1 / 1 / 2 / 3; justify-self: start; display: flex; z-index: 1; border-bottom: 1px solid var(--line); background: var(--bg); }
    .tab { padding: 0 10px; background: var(--dark); border-left: 1px solid var(--line); white-space: nowrap; }
    .tab:last-child { border-right: 1px solid var(--line); }
    .tabs .tab { line-height: 21px; }
    .tab.active { background: var(--bg); border-left: 0; font-weight: 700; }
    .tabs .tab.active { padding: 0 6px 0 3px; }

    .side { grid-area: 2 / 1 / 3 / 2; display: flex; flex-direction: column; min-height: 0; border-right: 3px solid #5a5a5a; padding-top: 2px; }
    .grip { display: flex; align-items: center; justify-content: center; height: 17px; flex: none; border: solid #a5a5a5; border-width: 1px 0; padding-right: 6px; }
    .grip i { width: 5px; height: 5px; border-radius: 50%; background: #c5c5c5; }
    .views { display: flex; height: 29px; flex: none; padding-top: 3px; border-bottom: 1px solid #a0a0a0; }
    .views button { display: flex; align-items: center; justify-content: center; width: 40px; background: var(--dark); border: 1px solid var(--line); border-left: 0; }
    .views button.sel { width: 35px; background: var(--bg); border-bottom-color: var(--bg); padding-right: 2px; }
    .views .more { margin-left: auto; width: 16px; background: none; border: 0; color: #c9c9c9; }
    .filter { display: flex; align-items: center; height: 25px; flex: none; border: 1px solid #a5a5a5; border-left: 0; margin-right: 1px; }
    .filter input { flex: 1; min-width: 0; outline: 0; }
    .list { display: grid; grid-template-columns: 1fr 14px; flex: 1; min-height: 0; overflow: hidden; }
    .tree { min-height: 0; min-width: 0; overflow: hidden; }
    .row { display: flex; align-items: center; gap: 5px; height: 22px; padding-left: 3px; white-space: nowrap; }
    .row .twist { width: 13px; }
    .vbar { display: flex; flex-direction: column; align-items: center; justify-content: space-between; background: #f1f1f1; color: #444; min-height: 0; padding: 5px 0; }
    .vbar i { width: 14px; flex: 0 1 227px; background: #c0c0c0; margin: auto 0 11px; }
    .hbar { display: flex; align-items: center; height: 17px; flex: none; background: #f1f1f1; color: #333; margin-bottom: 1px; }
    .hbar i { width: 102px; height: 15px; background: #cdcdcd; margin: 0 auto 0 4px; }
    .hbar button { width: 8px; }
    .hbar .r { width: 25px; }

    .view { grid-area: 1 / 2 / 3 / 3; position: relative; overflow: hidden; display: flex; flex-direction: column; border-right: 1px solid #6a6a6a;
      background:
        radial-gradient(ellipse 50% 40% at 100% 96%, rgba(238, 239, 243, .9), rgba(240, 241, 245, 0) 100%),
        linear-gradient(rgba(255, 255, 255, 0) 52%, rgba(252, 252, 253, .9) 67%, #fdfdfe 72%),
        radial-gradient(ellipse 50% 62% at 78% 44%, #d7dbe7 0%, rgba(218, 222, 233, .85) 35%, rgba(226, 229, 238, 0) 100%),
        linear-gradient(rgba(255, 255, 255, 0) 24%, #e3e6ee 52%, #e3e6ee 56%, rgba(255, 255, 255, 0) 68%),
        linear-gradient(100deg, #fff 52%, #e9ecf1 74%, #f1f2f4 88%, #f1f2f5 100%); }
    .heads { display: grid; grid-template-columns: 1fr auto 1fr; align-items: center; height: 30px; }
    .heads .mid { grid-column: 2; display: flex; align-items: center; gap: 7px; color: #8e8e8e; }
    .heads button { display: flex; align-items: center; gap: 5px; }
    .heads .drop { padding-right: 3px; }
    .heads .end { justify-self: end; display: flex; gap: 10px; padding-right: 12px; color: #97979b; }
    drone-model { position: absolute; left: calc(50% - 202px); top: 115px; }
    .triad { position: absolute; left: 3px; bottom: 20px; }
    .pane { align-self: flex-end; display: flex; flex-direction: column; margin-top: 28px; border: 1px solid var(--line); border-right: 0; z-index: 1; }
    .pane button { display: flex; align-items: center; justify-content: center; width: 25px; height: 24px; background: var(--dark); border-bottom: 1px solid var(--line); }
    .pane button:first-child { background: #b3b3b3; }
    .pane button:last-child { border-bottom: 0; height: 23px; }
    .split { position: absolute; left: -1px; top: 409px; display: flex; align-items: center; justify-content: center; width: 9px; height: 40px; background: #f1f1f1; border: 1px solid #9a9a9a; }
    .split i { width: 4px; height: 4px; border: 1px solid #777; border-radius: 50%; }
    .float { position: absolute; right: 5px; bottom: 5px; display: flex; gap: 6px; }
    .float button { display: flex; align-items: center; justify-content: center; width: 29px; height: 29px; border-radius: 5px; background: #54595c; border: 1px solid #8f9496; }
    .orb { position: absolute; right: -22px; bottom: 9px; width: 43px; height: 43px; border-radius: 50%; background: #000; border: 1px solid #4b7f94; padding-left: 13px; display: flex; align-items: center; color: #ccc; }

    .sheets { display: flex; height: 16px; flex: none; border-top: 1px solid var(--line); border-bottom: 1px solid var(--line); }
    .nav { display: flex; background: #8a8a8a; gap: 1px; width: 62px; overflow: hidden; }
    .nav button { display: flex; align-items: center; justify-content: center; width: 16px; background: #a6a6a6; border: 1px solid #c6c6c6; color: #7c7c7c; flex: none; }
    .nav button:first-child { width: 11px; }
    .sheets .tab { line-height: 13px; }
    .sheets .tab.active { padding: 0 9px 0 12px; }
    .sheets .tab:last-child { padding-right: 20px; }
    .status { display: flex; align-items: center; height: 18px; flex: none; overflow: hidden; white-space: nowrap; }
    .status span { padding: 0 5px; }
    .status .edition { padding: 0; margin-left: -3px; margin-right: auto; }
    .status .cell { border-left: 1px solid #ddd; padding: 0 6px 0 4px; }
    .status .gap { border-left: 1px solid #ddd; height: 15px; width: 8px; padding: 0; margin-left: 1px; }
    .status .gap.wide { width: 16px; margin-left: 0; }
    .status button { display: flex; align-items: center; gap: 19px; padding: 0 88px 0 31px; border-left: 1px solid #ddd; height: 15px; }
    .status svg.tag { margin-right: 6px; }
    .taskbar { display: grid; grid-template-columns: 43px 287px 1fr; height: 4px; flex: none; background: #111; }
    .taskbar i:nth-child(2) { background: #f2f2f2; }
  `;

  @state() private tab = "Assembly";
  @state() private sheet = "Model";

  private tabButton(name: string, active: string, pick: (n: string) => void) {
    return html`<button role="tab" aria-selected=${name === active} class=${classMap({ tab: true, active: name === active })} @click=${() => pick(name)}>${name}</button>`;
  }

  private cmd(t: Tool) {
    return html`<button class=${classMap({ cmd: true, menu: !!t.menu, on: !!t.on })} style="width:${t.width}px" ?disabled=${t.off}>
      ${icon(19, G[t.glyph])}
      <span>${t.label.map((l, i) => html`${i ? html`<br>` : nothing}${l}`)}</span>
      ${t.menu ? caret : nothing}
    </button>`;
  }

  private topTools() {
    const one = (g: string, label: string, cls = "") => html`<button class="tool ${cls}" aria-label=${label}>${icon(20, G[g])}${caret}</button>`;
    return html`<div class="tools">
      ${one("newdoc", "New")}${one("open", "Open")}${one("save", "Save")}${one("print", "Print")}${one("undo", "Undo", "dim")}
      <button class="tool pick" aria-label="Select"><span class="face">${icon(20, G.pointer)}</span>${caret}</button>
      <button class="tool solo" aria-label="Rebuild">${icon(18, G.traffic)}</button>
      <button class="tool solo" aria-label="File properties">${icon(17, G.options)}</button>
      <button class="tool opts" aria-label="Options">${icon(18, G.gearWhite)}${caret}</button>
    </div>`;
  }

  private chevron(d: string) {
    return html`<svg width="8" height="8" viewBox="0 0 8 8" aria-hidden="true"><path d=${d} fill="none" stroke="currentColor" stroke-width="2"/></svg>`;
  }

  render() {
    const head = (g: string, label: string, drop = false) =>
      html`<button class=${drop ? "drop" : ""} aria-label=${label}>${icon(19, G[g])}${drop ? caret : nothing}</button>`;
    return html`<div class="app">
      <header class="title">
        <div class="logo">
          <svg width="26" height="28" viewBox="0 0 26 28" aria-hidden="true" fill="none" stroke="#d0281e" stroke-width="2.500" stroke-linecap="round" stroke-linejoin="round">
            <path d="M10 2c6-2 11-1 9 2-2 2-6 3-8 4 4 0 5 3 2 6l-6 6"/><path d="M9 13l-5 12c6 0 10-6 10-11"/><path d="M25 11c-5-1-8 0-8 3s5 3 4 7c-1 3-5 4-8 3"/>
          </svg>
          <span class="word"><b>SOLID</b>WORKS</span>
        </div>
        <button class="expand" aria-label="Show menu"><svg width="7" height="12" viewBox="0 0 7 12"><path d="M0 0l7 6-7 6z" fill="currentColor"/></svg></button>
        ${this.topTools()}
        <div class="doc">firefly drone *</div>
        <div class="search">
          <svg width="16" height="16" viewBox="0 0 16 16" aria-hidden="true"><rect x=".5" y=".5" width="15" height="15" fill="#222" stroke="#555"/><path d="M3 3l5 4-5 5M9 12h5" fill="none" stroke="#fff" stroke-width="1.500"/></svg>
          <input type="text" aria-label="Search Commands" placeholder="Search Commands">
          <button aria-label="Search"><svg width="19" height="19" viewBox="0 0 19 19"><circle cx="8" cy="8" r="6.500" fill="#fff" stroke="#777" stroke-width="1.800"/><path d="M13 13l5 5" stroke="#777" stroke-width="3"/></svg>${caret}</button>
        </div>
        <div class="win">
          <button class="help" aria-label="Help">?${caret}</button>
          <button aria-label="Minimize">${icon(18, G.min)}</button>
          <button aria-label="Restore">${icon(18, G.restore)}</button>
          <button aria-label="Close">${icon(18, G.close)}</button>
        </div>
      </header>

      <div class="quick"><div class="set">
        ${["q1", "q2", "q3", "gearBlue"].map((g, i) => html`<button aria-label="Add-in ${i + 1}">${icon(17, G[g])}</button>`)}
      </div></div>

      <nav class="ribbon">${RIBBON.map((g) => html`<div class="group">${g.map((t) => this.cmd(t))}</div>`)}</nav>

      <main class="work">
        <div class="tabs" role="tablist">
          ${["Assembly", "Layout", "Sketch", "Evaluate", "SOLIDWORKS Add-Ins", "SOLIDWORKS MBD"].map((n) => this.tabButton(n, this.tab, (v) => (this.tab = v)))}
        </div>

        <aside class="side">
          <div class="grip"><i></i></div>
          <div class="views">
            <button class="sel" aria-label="Feature tree">${icon(18, G.assembly)}</button>
            <button aria-label="Properties">${icon(18, G.list)}</button>
            <button aria-label="Configurations">${icon(18, G.tree)}</button>
            <button aria-label="Dimensions">${icon(20, G.target)}</button>
            <button aria-label="Appearances">${icon(19, G.ball)}</button>
            <button class="more" aria-label="More"><svg width="10" height="12" viewBox="0 0 10 12"><path d="M1 1l4 5-4 5M5 1l4 5-4 5" fill="none" stroke="currentColor" stroke-width="1.800"/></svg></button>
          </div>
          <div class="filter">${icon(18, G.funnel)}<input type="text" aria-label="Filter"></div>
          <div class="list">
            <ul class="tree">
              ${TREE.map((r) => html`<li class="row">
                <svg class="twist" width="13" height="8" viewBox="0 0 13 8" aria-hidden="true"><path d="M0 0l4 4-4 4z" fill="#f4f4f4"/></svg>
                ${icon(17, r.kind === "asm" ? assemblyGlyph : r.kind === "part" ? partGlyph : matesGlyph)}<span>${r.text}</span>
              </li>`)}
            </ul>
            <div class="vbar">${this.chevron("M0 6l4-4 4 4")}<i></i>${this.chevron("M0 2l4 4 4-4")}</div>
          </div>
          <div class="hbar"><button aria-label="Scroll left">${this.chevron("M4 0L0 4l4 4")}</button><i></i><button class="r" aria-label="Scroll right">${this.chevron("M2 0l4 4-4 4")}</button></div>
        </aside>

        <section class="view">
          <div class="heads">
            <div class="mid">
              ${head("zoomfit", "Zoom to fit")}${head("zoomarea", "Zoom to area")}${head("prev", "Previous view")}${head("section", "Section view")}${head("dynamic", "Dynamic annotation views")}
              ${head("orient", "View orientation", true)}${head("display", "Display style", true)}${head("eye", "Hide or show items", true)}
              ${head("appearance", "Edit appearance")}${head("scene", "Apply scene", true)}${head("monitor", "View settings", true)}
            </div>
            <div class="end">
              ${["collapseL", "collapseR", "min", "restore", "close"].map((g) => html`<button aria-label=${g}>${icon(16, G[g])}</button>`)}
            </div>
          </div>
          <drone-model></drone-model>
          <div class="pane">
            ${["home", "library", "folder", "palette", "ball", "list", "chat"].map((g) => html`<button aria-label=${g}>${icon(18, G[g])}</button>`)}
          </div>
          <div class="split"><i></i></div>
          <svg class="triad" width="42" height="50" viewBox="0 0 42 50" aria-hidden="true">
            <path d="M3 4l5 8M8 4l-5 8" stroke="#c42020"/><path d="M9 9l9-4v2l16 2v4l-16-2v3z" fill="#b81f1f" stroke="#5b0d0d" stroke-width=".6"/>
            <path d="M34 12h4v22h2l-4 8-5-8h3z" fill="#1f8a2a" stroke="#0b3d10" stroke-width=".6"/><circle cx="32" cy="13" r="5" fill="#1a1a9c"/>
            <path d="M33 10h6v4" fill="none" stroke="#111" stroke-width="2"/><path d="M26 16h4l-4 4h5" fill="none" stroke="#1a1a9c"/><path d="M33 42l3 4 3-4M36 46v4" fill="none" stroke="#1f8a2a"/>
          </svg>
          <div class="float">
            <button aria-label="Microphone">${icon(21, G.mic)}</button>
            <button aria-label="Capture">${icon(21, svg`<path d="M14 3a8 8 0 1 0 0 14M8 1l4 2-3 3M11 15l3 2-1 3" fill="none" stroke="#e4e4e4" stroke-width="1.600"/>`)}</button>
          </div>
          <button class="orb" aria-label="Open overlay"><svg width="10" height="16" viewBox="0 0 10 16"><path d="M8 1L1 8l7 7" fill="none" stroke="currentColor" stroke-width="1.500"/></svg></button>
        </section>
      </main>

      <div class="sheets" role="tablist">
        <div class="nav">
          ${["M0 0v8M7 0L2 4l5 4z", "M6 0L1 4l5 4z", "M2 0l5 4-5 4z", "M1 0l5 4-5 4zM7 0v8"].map((d, i) => html`<button aria-label="Sheet ${i + 1}"><svg width="8" height="8" viewBox="0 0 8 8"><path d=${d} fill="currentColor" stroke="currentColor"/></svg></button>`)}
        </div>
        ${["Model", "3D Views", "Motion Study 2"].map((n) => this.tabButton(n, this.sheet, (v) => (this.sheet = v)))}
      </div>

      <footer class="status">
        <span class="edition">SOLIDWORKS Premium 2016 x64 Edition</span>
        <span>Diameter: 18.46mm</span><span>Under Defined</span>
        <span class="gap"></span><span class="cell">Editing Assembly</span><span class="gap wide"></span>
        <button>MMGS <svg width="6" height="4" viewBox="0 0 6 4"><path d="M0 4h6L3 0z" fill="currentColor"/></svg></button>
        <svg class="tag" width="16" height="16" viewBox="0 0 20 20" aria-hidden="true">${G.tag}</svg>
      </footer>
      <div class="taskbar"><i></i><i></i><i></i></div>
    </div>`;
  }
}
